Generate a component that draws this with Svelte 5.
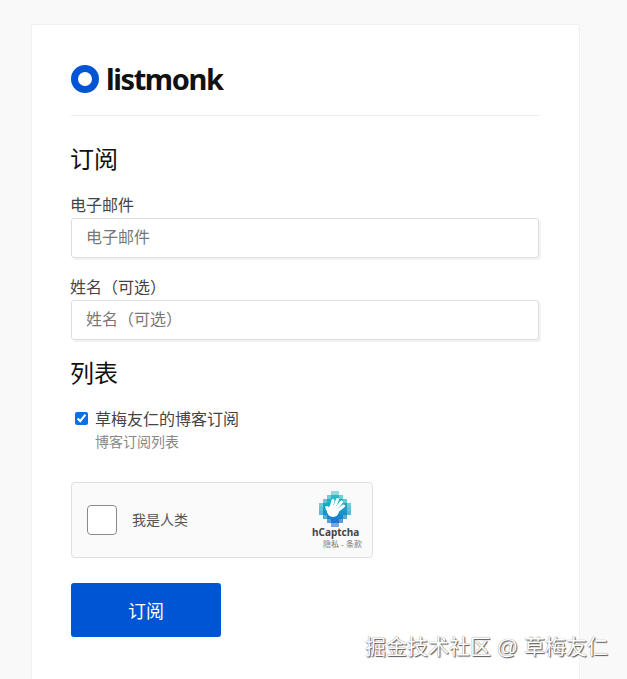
<script>
	// stepped diamond of the hCaptcha badge, one entry per row of 4px cells
	const rows = [
		{ from: 12, to: 20, mid: '#45c6cc', edge: '#8adbdc' },
		{ from: 8, to: 24, mid: '#25bac8', edge: '#6bd0d6' },
		{ from: 4, to: 28, mid: '#1eb2c6', edge: '#5fcad3' },
		{ from: 0, to: 32, mid: '#1ea8c6', edge: '#6cccd6' },
		{ from: 0, to: 32, mid: '#1c9cc8', edge: '#62c0d8' },
		{ from: 0, to: 32, mid: '#1b90ca', edge: '#5cb6dc' },
		{ from: 4, to: 28, mid: '#1a84cc', edge: '#58a8dc' },
		{ from: 8, to: 24, mid: '#1c78cc', edge: '#5a9cdc' },
		{ from: 12, to: 20, mid: '#2a74cc', edge: '#78a6e0' }
	];

	const fingers = [
		[12, 17, 14, 9.5],
		[15, 17, 18.5, 8.5],
		[16, 19, 22.5, 11],
		[17, 21, 24.5, 15],
		[10, 21, 7.8, 16.5]
	];
</script>

<div class="page">
	<div class="card">
		<div class="header">
			<div class="logo">
				<svg class="logo-mark" viewBox="0 0 28 28" width="28" height="28">
					<circle cx="14" cy="14" r="10.5" fill="none" stroke="#0055d4" stroke-width="7" />
				</svg>
				<span class="logo-text">listmonk</span>
			</div>
		</div>

		<h2>订阅</h2>

		<div class="field">
			<label for="email">电子邮件</label>
			<input id="email" type="text" placeholder="电子邮件" />
		</div>
		<div class="field">
			<label for="name">姓名（可选）</label>
			<input id="name" type="text" placeholder="姓名（可选）" />
		</div>

		<h2 class="lists-title">列表</h2>

		<div class="list">
			<input id="list-1" type="checkbox" checked />
			<div class="list-text">
				<label for="list-1">草梅友仁的博客订阅</label>
				<p>博客订阅列表</p>
			</div>
		</div>

		<div class="captcha">
			<div class="captcha-box"></div>
			<span class="captcha-label">我是人类</span>
			<div class="captcha-brand">
				<svg class="brand-mark" viewBox="0 0 32 36" width="32" height="36">
					{#each rows as row, i}
						<rect x={row.from} y={i * 4} width={row.to - row.from} height="4" fill={row.mid} />
						<rect x={row.from} y={i * 4} width="4" height="4" fill={row.edge} />
						<rect x={row.to - 4} y={i * 4} width="4" height="4" fill={row.edge} />
					{/each}
					<circle cx="14" cy="20" r="6" fill="#fff" />
					{#each fingers as [x1, y1, x2, y2]}
						<line {x1} {y1} {x2} {y2} stroke="#fff" stroke-width="3" stroke-linecap="round" />
					{/each}
				</svg>
				<span class="brand-name">hCaptcha</span>
				<span class="brand-links">隐私 - 条款</span>
			</div>
		</div>

		<button type="button">订阅</button>
	</div>

	<div class="watermark">掘金技术社区 @ 草梅友仁</div>
</div>

<style>
	:global(body) {
		background: #f9f9f9;
		overflow: hidden;
	}

	.page {
		position: relative;
		height: 679px;
		overflow: hidden;
		padding-top: 24px;
		box-sizing: border-box;
		font-family: 'Liberation Sans', 'Noto Sans CJK SC', sans-serif;
		color: #444;
	}

	.card {
		width: 549px;
		margin-left: 31px;
		box-sizing: border-box;
		padding: 40px 40px 80px 38px;
		background: #fff;
		border: 1px solid #f0f0f0;
		border-radius: 2px;
	}

	.header {
		height: 50px;
		margin-bottom: 26px;
		margin-left: 1px;
		border-bottom: 1px solid #eee;
	}

	.logo {
		display: flex;
		align-items: flex-start;
		gap: 7px;
	}

	.logo-text {
		font-family: 'Noto Sans', sans-serif;
		font-size: 29px;
		line-height: 28px;
		font-weight: 700;
		letter-spacing: -1.4px;
		color: #111;
	}

	h2 {
		margin: 0 0 16px;
		font-size: 24px;
		line-height: 36px;
		font-weight: 400;
		color: #111;
	}

	.field {
		display: flex;
		flex-direction: column;
		margin-bottom: 18px;
	}

	.field + .field {
		margin-bottom: 16px;
	}

	.field label {
		font-size: 16px;
		line-height: 24px;
	}

	.field input {
		box-sizing: border-box;
		height: 40px;
		margin-left: 1px;
		padding: 0 14px;
		font: inherit;
		font-size: 16px;
		color: #444;
		background: #fff;
		border: 1px solid #ddd;
		border-radius: 3px;
		box-shadow: 2px 2px 0 #f3f3f3;
	}

	.field input::placeholder {
		color: #777;
	}

	.lists-title {
		margin-bottom: 16px;
	}

	.list {
		display: flex;
		align-items: flex-start;
		gap: 7px;
		padding-left: 5px;
	}

	.list input {
		width: 13px;
		height: 13px;
		margin: 4px 0 0;
		accent-color: #0b6fe8;
	}

	.list-text label {
		display: block;
		font-size: 16px;
		line-height: 24px;
	}

	.list-text p {
		margin: 0;
		font-size: 14px;
		line-height: 20px;
		color: #888;
	}

	.captcha {
		display: flex;
		align-items: center;
		box-sizing: border-box;
		width: 302px;
		height: 76px;
		margin-top: 30px;
		margin-left: 1px;
		padding: 0 10px 0 15px;
		background: #fafafa;
		border: 1px solid #e0e0e0;
		border-radius: 4px;
	}

	.captcha-box {
		width: 30px;
		height: 30px;
		box-sizing: border-box;
		background: #fff;
		border: 1px solid #8a8a8a;
		border-radius: 4px;
	}

	.captcha-label {
		margin-left: 15px;
		margin-bottom: 2px;
		font-size: 14px;
		color: #555;
	}

	.captcha-brand {
		display: flex;
		flex-direction: column;
		width: 51px;
		margin-left: auto;
		margin-top: 2px;
	}

	.brand-mark {
		margin-left: 8px;
		margin-bottom: -2px;
	}

	.brand-name {
		font-family: 'Noto Sans', sans-serif;
		font-size: 10px;
		font-weight: 700;
		line-height: 14px;
		margin-left: 1px;
		color: #444;
	}

	.brand-links {
		font-size: 8px;
		line-height: 12px;
		color: #777;
		align-self: flex-end;
		white-space: nowrap;
	}

	button {
		display: block;
		width: 150px;
		height: 54px;
		margin-top: 25px;
		margin-left: 1px;
		font: inherit;
		font-size: 18px;
		color: #fff;
		background: #0055d4;
		border: none;
		border-radius: 3px;
	}

	.watermark {
		position: absolute;
		left: 365px;
		top: 632px;
		font-size: 21px;
		line-height: 30px;
		white-space: nowrap;
		color: #fff;
		text-shadow: 1px 1px 1px #555, 0 0 1px #777;
	}
</style>
